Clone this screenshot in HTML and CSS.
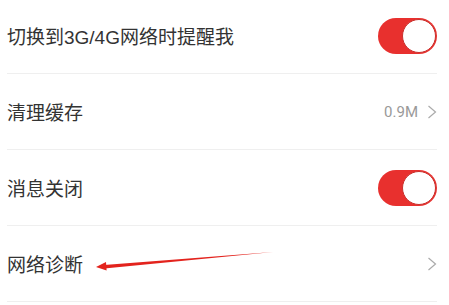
FILE: index.html
```html
<!DOCTYPE html>
<html lang="zh-CN">
<head>
<meta charset="utf-8">
<link rel="stylesheet" href="styles.css">
</head>
<body>
<div class="list">
  <div class="row">
    <span class="label">切换到3G/4G网络时提醒我</span>
    <span class="switch"><span class="knob"></span></span>
  </div>
  <div class="row">
    <span class="label">清理缓存</span>
    <span class="right"><span class="value">0.9M</span><svg class="chev" viewBox="0 0 10 14" width="10" height="14"><path d="M1.5 1 L8.5 7 L1.5 13" fill="none" stroke="#aaa" stroke-width="1.2"/></svg></span>
  </div>
  <div class="row">
    <span class="label">消息关闭</span>
    <span class="switch"><span class="knob"></span></span>
  </div>
  <div class="row">
    <span class="label">网络诊断</span>
    <span class="right"><svg class="chev" viewBox="0 0 10 14" width="10" height="14"><path d="M1.5 1 L8.5 7 L1.5 13" fill="none" stroke="#aaa" stroke-width="1.2"/></svg></span>
  </div>
</div>
<svg class="arrow" width="449" height="305" viewBox="0 0 449 305">
  <path d="M273 252 L104 265 L104.4 268.6 Z" fill="#e3231d"/>
  <path d="M96 267 L106 262 L106.6 270.5 Z" fill="#e3231d"/>
</svg>
</body>
</html>
```
FILE: styles.css
```css
html, body {
  margin: 0;
  padding: 0;
  background: #fff;
  overflow: hidden;
}
body {
  width: 449px;
  height: 305px;
  position: relative;
  font-family: "Liberation Sans", "Noto Sans CJK SC", sans-serif;
}
.list {
  margin-top: -2px;
  padding-left: 7px;
  padding-right: 12px;
}
.row {
  height: 75px;
  border-bottom: 1px solid #efefef;
  display: flex;
  align-items: center;
  justify-content: space-between;
}
.label {
  font-size: 19px;
  color: #333;
}
.switch {
  width: 59px;
  height: 36px;
  border-radius: 18px;
  background: #e8302e;
  display: flex;
  align-items: center;
  justify-content: flex-end;
  padding-right: 1px;
  box-sizing: border-box;
}
.knob {
  width: 34px;
  height: 34px;
  border-radius: 50%;
  background: #fff;
  box-sizing: border-box;
  border: 1.5px solid #c9302c;
}
.right {
  display: flex;
  align-items: center;
  gap: 9px;
}
.value {
  font-size: 15px;
  color: #999;
  font-family: "Roboto", "Noto Sans", sans-serif;
}
.chev {
  display: block;
}
.arrow {
  position: absolute;
  left: 0;
  top: 0;
  pointer-events: none;
}
```
